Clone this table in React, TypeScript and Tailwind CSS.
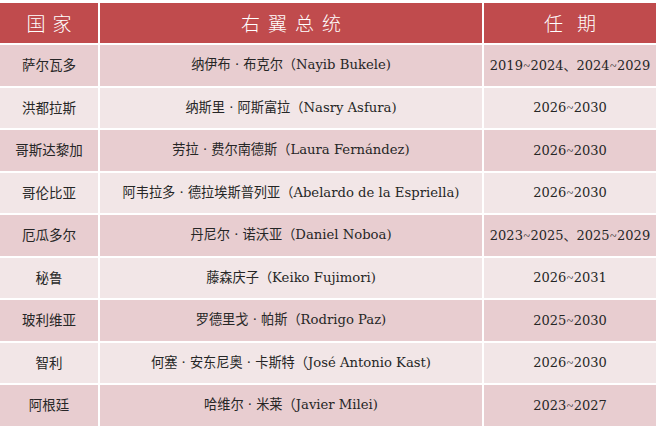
import React from "react";

const rows: [string, string, string][] = [
  ["萨尔瓦多", "纳伊布 · 布克尔（Nayib Bukele)", "2019~2024、2024~2029"],
  ["洪都拉斯", "纳斯里 · 阿斯富拉（Nasry Asfura)", "2026~2030"],
  ["哥斯达黎加", "劳拉 · 费尔南德斯（Laura Fernández)", "2026~2030"],
  ["哥伦比亚", "阿韦拉多 · 德拉埃斯普列亚（Abelardo de la Espriella)", "2026~2030"],
  ["厄瓜多尔", "丹尼尔 · 诺沃亚（Daniel Noboa)", "2023~2025、2025~2029"],
  ["秘鲁", "藤森庆子（Keiko Fujimori)", "2026~2031"],
  ["玻利维亚", "罗德里戈 · 帕斯（Rodrigo Paz)", "2025~2030"],
  ["智利", "何塞 · 安东尼奥 · 卡斯特（José Antonio Kast)", "2026~2030"],
  ["阿根廷", "哈维尔 · 米莱（Javier Milei)", "2023~2027"],
];

const font = {
  fontFamily: '"DejaVu Serif", "Noto Sans CJK SC", serif',
};

function Period({ text }: { text: string }) {
  const parts = text.split("~");
  return (
    <span>
      {parts.map((p, i) => (
        <React.Fragment key={i}>
          {i > 0 && (
            <span className="[font-family:'Liberation_Serif',serif] text-[12px] px-[0.5px]">~</span>
          )}
          {p}
        </React.Fragment>
      ))}
    </span>
  );
}

const head =
  "h-[40.5px] bg-[#c04b4d] text-white flex items-center justify-center text-[19px] [font-family:'Noto_Sans_CJK_SC',sans-serif] font-light";

export default function App() {
  return (
    <div className="w-[660px] h-[431px] bg-white pt-[2.5px] overflow-hidden">
      <div
        className="grid grid-cols-[98px_382px_172px] gap-x-[2px] gap-y-[2px] w-[656px] text-[#262626]"
        style={font}
      >
        <div className={`${head} tracking-[7px] pl-[7px]`}>国家</div>
        <div className={`${head} tracking-[8px] pl-[8px]`}>右翼总统</div>
        <div className={`${head} tracking-[14px] pl-[14px]`}>任期</div>
        {rows.map((r, i) => {
          const bg = i % 2 === 0 ? "bg-[#e8cdd0]" : "bg-[#f2e6e7]";
          return (
            <React.Fragment key={i}>
              <div className={`h-[40.5px] ${bg} flex items-center justify-center text-[13.5px]`}>
                {r[0]}
              </div>
              <div className={`h-[40.5px] ${bg} flex items-center justify-center text-[13.2px]`}>
                {r[1]}
              </div>
              <div className={`h-[40.5px] ${bg} flex items-center justify-center text-[13px]`}>
                <Period text={r[2]} />
              </div>
            </React.Fragment>
          );
        })}
      </div>
    </div>
  );
}
